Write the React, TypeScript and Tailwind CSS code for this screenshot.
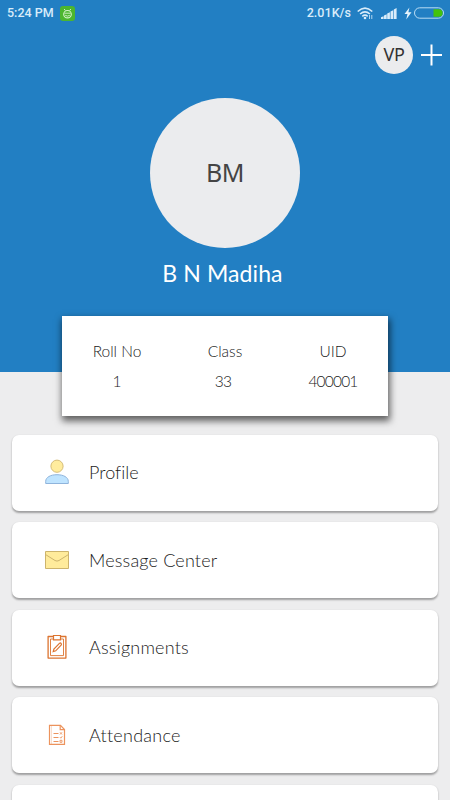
import type { ReactNode } from "react"

function ProfileIcon() {
  return (
    <svg width="26" height="26" viewBox="0 0 26 26" strokeWidth="1">
      <circle cx="13" cy="7.2" r="6.1" fill="#ffec9e" stroke="#d6bd78" />
      <path d="M1.7 24.5v-2.2c0-4 4.8-6.6 11.3-6.6s11.3 2.6 11.3 6.6v2.2z" fill="#bfe4ff" stroke="#8fb4dc" />
    </svg>
  )
}

function MessageIcon() {
  return (
    <svg width="26" height="20" viewBox="0 0 26 20" stroke="#cdb46c" strokeWidth="1">
      <path d="M1.5 1.5h23v17h-23z" fill="#ffeb9b" />
      <path d="M1.5 4.5l9.5 6q2 1.2 4 0l9.5-6" fill="none" />
    </svg>
  )
}

function AssignmentIcon() {
  return (
    <svg width="22" height="26" viewBox="0 0 22 26" fill="none" stroke="#dc7430">
      <path d="M7 2.5H2.1v21.6h17.8V2.5H15" strokeWidth="1.3" strokeLinejoin="round" />
      <path d="M7 5H4.5v16.6h13V5H15" strokeWidth="0.9" />
      <path d="M7.5 5.8V1.5h7v4.3z" fill="#fff" strokeWidth="1.2" />
      <path d="M7.2 17.6l.7-2.6 5.5-5.6q1-.8 1.7 0t0 1.8l-5.4 5.6z" strokeWidth="1.2" />
    </svg>
  )
}

function AttendanceIcon() {
  return (
    <svg width="18" height="22" viewBox="0 0 18 22" fill="none" stroke="#ec935d">
      <path d="M1.5 1.3h11l4 4.2v14.8h-15z" strokeWidth="1.2" />
      <path d="M12.2 1.5v4.2h4" strokeWidth="1.2" />
      <path d="M3.5 2v18" strokeWidth="0.3" />
      <path d="M5.5 9.5h5M5.5 13.5h5M5.5 17.5h5" strokeWidth="1" />
      <path d="M12 8.3l2 2.2m0-2.2l-2 2.2M12 13.2l.8 1 1.5-2M12 16.3h2v2h-2z" strokeWidth="0.9" />
    </svg>
  )
}

const details = [
  { label: "Roll No", value: "1", className: "ml-[18px] w-[74px]", valueClass: "" },
  { label: "Class", value: "33", className: "w-[74px]", valueClass: "pr-1 tracking-[-0.8px]" },
  { label: "UID", value: "400001", className: "mr-[18px] w-[74px]", valueClass: "tracking-[-0.8px]" },
]

const menu: { title: string; icon: ReactNode; titleClass: string }[] = [
  { title: "Profile", icon: <ProfileIcon />, titleClass: "tracking-[0.05px]" },
  { title: "Message Center", icon: <MessageIcon />, titleClass: "tracking-[0.17px]" },
  { title: "Assignments", icon: <AssignmentIcon />, titleClass: "tracking-[0.2px]" },
  { title: "Attendance", icon: <AttendanceIcon />, titleClass: "tracking-[0.25px]" },
  { title: "", icon: null, titleClass: "" },
]

function StatusBar() {
  return (
    <div className="flex h-[26px] items-center pl-[7px] pr-[5px] font-[Roboto,sans-serif] text-[12.5px] font-medium leading-none text-[#d9ecfa]">
      <span className="w-[46px] whitespace-nowrap">5:24 PM</span>
      <svg className="ml-[7px]" width="15" height="15" viewBox="0 0 15 15">
        <rect width="15" height="15" rx="3" fill="#4bb62f" />
        <g fill="none" stroke="#d5f3cb">
          <path d="M4.2 3l1.1 1.5M10.8 3L9.7 4.5" strokeWidth="1" />
          <ellipse cx="7.5" cy="8.2" rx="3.8" ry="3.7" strokeWidth="1.1" />
          <path d="M4.4 7.2h6.2M5.2 9.3q2.3 1.6 4.6 0" strokeWidth="0.9" />
        </g>
      </svg>
      <span className="ml-auto whitespace-nowrap tracking-[0.05px]">2.01K/s</span>
      <svg className="ml-[6px]" width="17" height="13" viewBox="0 0 17 13" fill="none" stroke="#d9ecfa" strokeWidth="1.6">
        <path d="M.7 4.5q7.3-6.6 14.6 0M3.1 7q4.9-4.3 9.8 0M5.3 9.3q2.7-2.3 5.4 0" />
        <circle cx="8" cy="11" r="1.3" fill="#d9ecfa" stroke="none" />
        <path d="M12.5 8v4M14.8 8v4" strokeWidth="0.8" />
      </svg>
      <svg className="ml-[7px]" width="16" height="11" viewBox="0 0 16 11" fill="#d9ecfa">
        <path d="M0 9.2l2.6-1V11H0zM3 7.6l2.7-1.3V11H3zM6.2 5.6l2.7-1.4V11H6.2zM9.5 3.6l2.7-1.4V11H9.5zM12.8 1.6L15.6 0v11h-2.8z" />
      </svg>
      <svg className="ml-[7px]" width="8" height="13" viewBox="0 0 8 13" fill="#e5f3fc">
        <path d="M5.4.5L.5 7h3l-1.3 5.5L7.5 5.3H4.4z" />
      </svg>
      <svg className="ml-[1px]" width="32" height="12" viewBox="0 0 32 12">
        <rect x="1.5" y="0.8" width="29" height="10.4" rx="5.2" fill="none" stroke="#b9dcf4" />
        <path d="M20.5 2.2h5.3a3.8 3.8 0 0 1 0 7.6h-5.3z" fill="#43c20c" />
      </svg>
    </div>
  )
}

export default function App() {
  return (
    <div className="h-[800px] w-[450px] overflow-hidden bg-[#ededee] font-[Lato,sans-serif]">
      <header className="flex h-[372px] flex-col bg-[#227fc3]">
        <StatusBar />
        <div className="flex h-[71px] items-start justify-end gap-[7px] pr-[7px] pt-2.5">
          <div className="flex h-[38px] w-[38px] items-center justify-center rounded-full bg-[#ebecee] pb-px font-['Noto_Sans',sans-serif] text-[18px] tracking-[-0.4px] text-[#333]">
            VP
          </div>
          <svg width="23" height="38" viewBox="0 0 23 38" stroke="#fff" strokeWidth="2">
            <path d="M11.5 8.5v21M1 19h21" />
          </svg>
        </div>
        <div className="mt-[0.5px] flex h-[150px] w-[150px] items-center justify-center self-center rounded-full bg-[#ebecee] font-['Noto_Sans',sans-serif] text-[25px] tracking-[-0.5px] text-[#444]">
          BM
        </div>
        <h1 className="mt-[10.5px] self-center whitespace-nowrap pr-[5px] text-[23px] font-normal leading-[30px] tracking-[0.1px] text-white">
          B N Madiha
        </h1>
      </header>

      <section className="relative mx-auto -mt-14 flex h-[100px] w-[326px] justify-between bg-white pt-[25px] text-[15.5px] font-light leading-5 text-[#222] shadow-[1px_4px_7px_1px_rgba(0,0,0,0.6)]">
        {details.map(({ label, value, className, valueClass }) => (
          <div key={label} className={`flex flex-col items-center gap-2.5 ${className}`}>
            <span>{label}</span>
            <span className={valueClass}>{value}</span>
          </div>
        ))}
      </section>

      <main className="mt-[18.5px] flex flex-col gap-[11.5px] px-3">
        {menu.map(({ title, icon, titleClass }, i) => (
          <div
            key={i}
            className="flex h-[76px] shrink-0 items-center rounded-[7px] bg-white pb-px pl-[31px] shadow-[0_1.5px_2px_0_rgba(0,0,0,0.33)]"
          >
            <div className="flex w-7 justify-center">{icon}</div>
            <span className={`ml-[18px] whitespace-nowrap text-[18px] font-light leading-6 text-[#1c1c1c] ${titleClass}`}>
              {title}
            </span>
          </div>
        ))}
      </main>
    </div>
  )
}
